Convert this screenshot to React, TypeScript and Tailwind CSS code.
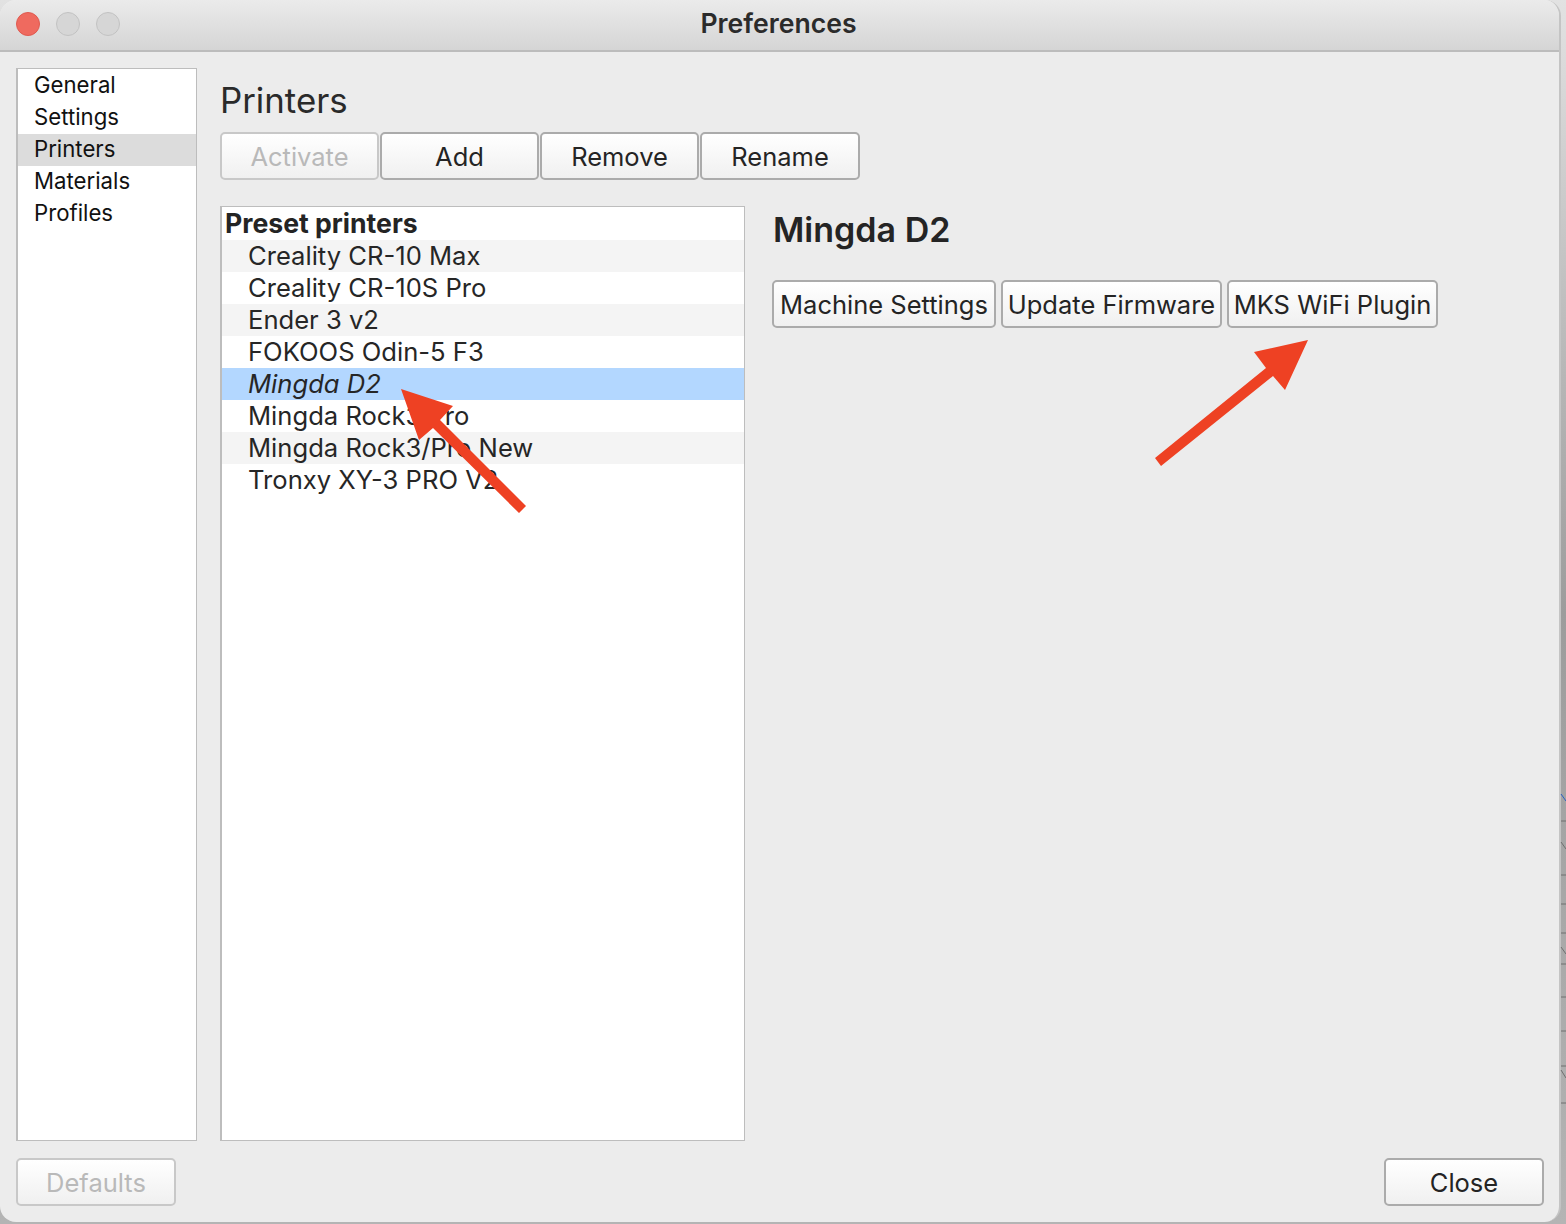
import React from 'react';

const sections = ['General', 'Settings', 'Printers', 'Materials', 'Profiles'];

const printers = [
  'Creality CR-10 Max',
  'Creality CR-10S Pro',
  'Ender 3 v2',
  'FOKOOS Odin-5 F3',
  'Mingda D2',
  'Mingda Rock3 Pro',
  'Mingda Rock3/Pro New',
  'Tronxy XY-3 PRO V2',
];

const Btn: React.FC<{ label: string; disabled?: boolean; className?: string }> = ({ label, disabled, className }) => (
  <button
    className={`h-[48px] pt-[1px] rounded-[5px] border-2 bg-gradient-to-b from-white to-[#f0f0f0] text-[25.5px] leading-none flex items-center justify-center ${
      disabled ? 'border-[#c8c8c8] text-[#b9b9b9]' : 'border-[#ababab] text-[#242424]'
    } ${className ?? ''}`}
  >
    {label}
  </button>
);

export default function App() {
  return (
    <div className="relative w-[1566px] h-[1224px] overflow-hidden bg-gradient-to-b from-[#e2e2e2] via-[#9c9c9c] to-[#b4b4b4] font-['Inter','Liberation_Sans',sans-serif]">
      <div className="w-[1561px] h-[1222px] rounded-[16px] overflow-hidden bg-[#ececec] border-r-2 border-[#c4c4c4] flex flex-col">
        {/* Title bar */}
        <div className="relative h-[52px] shrink-0 border-b-2 border-[#bcbcbc] bg-gradient-to-b from-[#ebebeb] to-[#d5d5d5] flex items-center justify-center">
          <div className="absolute left-[16px] top-[12px] flex gap-[16px]">
            <span className="w-[24px] h-[24px] rounded-full bg-[#ef6a5f] border border-[#df5a50]" />
            <span className="w-[24px] h-[24px] rounded-full bg-[#d6d6d6] border border-[#c2c2c2]" />
            <span className="w-[24px] h-[24px] rounded-full bg-[#d6d6d6] border border-[#c2c2c2]" />
          </div>
          <span className="text-[26.6px] font-semibold text-[#2b2b2b] pb-[3px] pr-[2px]">Preferences</span>
        </div>

        {/* Body */}
        <div className="flex-1 flex flex-col pl-[16px] pr-[15px] pt-[16px] pb-[16px] min-h-0">
          <div className="flex-1 flex min-h-0 gap-[23px]">
            <div className="w-[181px] shrink-0 bg-white border border-l-2 border-[#bdbdbd] pt-[1px]">
              {sections.map((s) => (
                <div
                  key={s}
                  className={`h-[32px] pl-[16px] pb-[2px] flex items-center text-[22.2px] text-[#111] ${s === 'Printers' ? 'bg-[#dcdcdc]' : ''}`}
                >
                  {s}
                </div>
              ))}
            </div>

            <div className="flex-1 flex flex-col min-w-0">
              <div className="h-[64px] text-[34.8px] text-[#2a2a2a] leading-none pt-[15px] shrink-0">Printers</div>
              <div className="flex gap-[1px] shrink-0">
                <Btn label="Activate" disabled className="w-[159px]" />
                <Btn label="Add" className="w-[159px]" />
                <Btn label="Remove" className="w-[159px]" />
                <Btn label="Rename" className="w-[160px]" />
              </div>
              <div className="flex-1 flex mt-[26px] min-h-0 gap-[27px]">
                <div className="w-[525px] shrink-0 bg-white border border-l-2 border-[#bdbdbd] pt-[1px]">
                  <div className="h-[32px] pl-[3px] flex items-center text-[26.6px] font-bold text-[#242424]">Preset printers</div>
                  {printers.map((p, i) => (
                    <div
                      key={p}
                      className={`h-[32px] pl-[26px] flex items-center text-[25.6px] text-[#262626] ${
                        p === 'Mingda D2' ? 'bg-[#b3d7ff] italic' : i % 2 === 0 ? 'bg-[#f4f4f4]' : ''
                      }`}
                    >
                      {p}
                    </div>
                  ))}
                </div>
                <div className="flex-1">
                  <div className="h-[74px] pl-[1px] text-[34px] font-semibold text-[#242424] pt-[3px] leading-[42px]">Mingda D2</div>
                  <div className="flex gap-[5px]">
                    <Btn label="Machine Settings" className="w-[224px]" />
                    <Btn label="Update Firmware" className="w-[221px]" />
                    <Btn label="MKS WiFi Plugin" className="w-[211px]" />
                  </div>
                </div>
              </div>
            </div>
          </div>
          <div className="mt-[17px] flex justify-between shrink-0">
            <Btn label="Defaults" disabled className="w-[160px]" />
            <Btn label="Close" className="w-[160px]" />
          </div>
        </div>
      </div>

      {/* Annotation arrows and the bit of desktop showing at the window edge */}
      <svg className="absolute inset-0 pointer-events-none" width="1566" height="1224" viewBox="0 0 1566 1224">
        <g stroke="#6f6f6f" strokeWidth="1" fill="none">
          <path d="M1561 821H1566M1561 875H1566M1561 904H1566M1561 933H1566M1561 964H1566M1561 997H1566M1561 1031H1566M1561 1066H1566M1561 1103H1566" />
          <path d="M1561 842L1566 849M1561 947L1566 954M1561 1070L1566 1078" />
        </g>
        <path d="M1561 794L1566 801" stroke="#2a5fc0" strokeWidth="1" fill="none" />
        <polygon fill="#ee4123" points="401,389 453,406 440,420 526,506 519,513 433,428 419,440" />
        <polygon fill="#ee4123" points="1308,340 1254,352 1266,368 1155,458 1161,466 1273,376 1285,390" />
      </svg>
    </div>
  );
}
